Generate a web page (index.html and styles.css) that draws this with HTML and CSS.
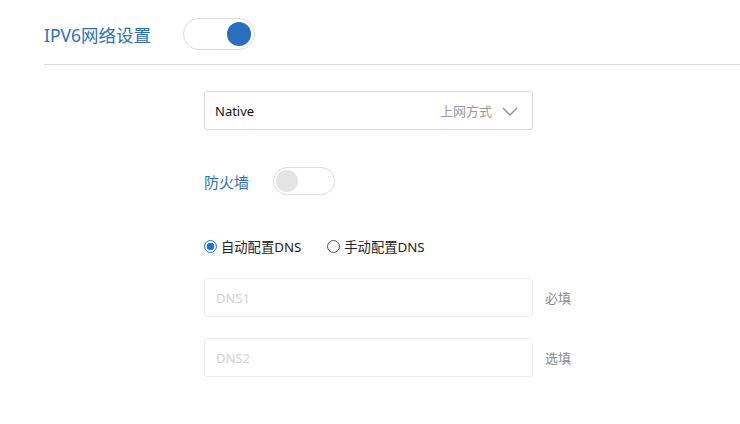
FILE: index.html
```html
<!DOCTYPE html>
<html lang="zh-CN">
<head>
    <meta charset="UTF-8">
    <meta name="viewport" content="width=device-width, initial-scale=1.0">
    <title>IPV6网络设置</title>
    <link rel="stylesheet" href="styles.css">
</head>
<body>
    <div class="header">
        <h1 class="title">IPV6网络设置</h1>
        <div class="switch switch-on"><span class="knob"></span></div>
    </div>

    <div class="content">
        <div class="select-box">
            <span class="select-value">Native</span>
            <span class="select-label">上网方式</span>
            <svg class="chevron" width="16" height="9" viewBox="0 0 16 9">
                <path d="M1 1 L8 8 L15 1" fill="none" stroke="#8c8c8c" stroke-width="1.4"/>
            </svg>
        </div>

        <div class="firewall-row">
            <span class="row-label">防火墙</span>
            <div class="switch switch-small"><span class="knob"></span></div>
        </div>

        <div class="radio-row">
            <label class="radio"><span class="dot dot-checked"></span>自动配置DNS</label>
            <label class="radio"><span class="dot"></span>手动配置DNS</label>
        </div>

        <div class="field-row">
            <input class="field" type="text" placeholder="DNS1" disabled>
            <span class="hint">必填</span>
        </div>
        <div class="field-row">
            <input class="field" type="text" placeholder="DNS2" disabled>
            <span class="hint">选填</span>
        </div>
    </div>
</body>
</html>
```

FILE: styles.css
```css
/* General Styles */
body {
    margin: 0;
    background: #fff;
    font-family: "Noto Sans", "Noto Sans CJK SC", sans-serif;
    color: #222;
}

.header {
    display: flex;
    align-items: center;
    height: 60px;
    padding-top: 4px;
    margin-left: 44px;
    border-bottom: 1px solid #d9d9d9;
}

.title {
    margin: 0;
    font-size: 17.5px;
    font-weight: normal;
    color: #2b6fbd;
    margin-right: 32px;
}

.switch {
    position: relative;
    box-sizing: border-box;
    width: 72px;
    height: 32px;
    border: 1px solid #dcdcdc;
    border-radius: 16px;
    background: #fff;
}

.switch .knob {
    position: absolute;
    top: 3px;
    left: 3px;
    width: 24px;
    height: 24px;
    border-radius: 50%;
    background: #e4e4e4;
}

.switch-on .knob {
    left: auto;
    right: 3px;
    background: #2a6ebd;
}

.switch-small {
    width: 62px;
    height: 28px;
    border-radius: 14px;
}

.switch-small .knob {
    top: 2px;
    left: 2px;
    width: 22px;
    height: 22px;
}

.content {
    padding-left: 204px;
    padding-top: 26px;
}

.select-box {
    box-sizing: border-box;
    display: flex;
    align-items: center;
    width: 329px;
    height: 39px;
    padding: 0 14px 0 10px;
    border: 1px solid #d9d9d9;
    border-radius: 3px;
}

.select-value {
    flex: 1;
    font-size: 13px;
    color: #111;
}

.select-label {
    font-size: 13px;
    color: #999;
    margin-right: 10px;
}

.chevron {
    display: block;
    margin-top: 2px;
}

.firewall-row {
    display: flex;
    align-items: center;
    margin-top: 37px;
}

.row-label {
    font-size: 15px;
    color: #2b6fbd;
    margin-right: 24px;
}

.radio-row {
    display: flex;
    align-items: center;
    margin-top: 42px;
    height: 18px;
}

.radio {
    display: flex;
    align-items: center;
    font-size: 13.3px;
    color: #222;
    margin-right: 26px;
}

.dot {
    box-sizing: border-box;
    width: 13px;
    height: 13px;
    border-radius: 50%;
    border: 1px solid #555;
    margin-right: 4px;
    background: #fff;
}

.dot-checked {
    border: 1px solid #1a73e8;
    background: radial-gradient(circle, #1a73e8 0 3.5px, #fff 4px);
}

.field-row {
    display: flex;
    align-items: center;
    margin-top: 23px;
}

.field-row + .field-row {
    margin-top: 21px;
}

.field {
    box-sizing: border-box;
    width: 329px;
    height: 39px;
    padding: 0 11px;
    border: 1px solid #eeeeee;
    border-radius: 3px;
    background: #fff;
    font-family: "Noto Sans", sans-serif;
    font-size: 13px;
}

.field::placeholder {
    color: #d2d2d2;
}

.hint {
    font-size: 13px;
    color: #888;
    margin-left: 12px;
}
```
